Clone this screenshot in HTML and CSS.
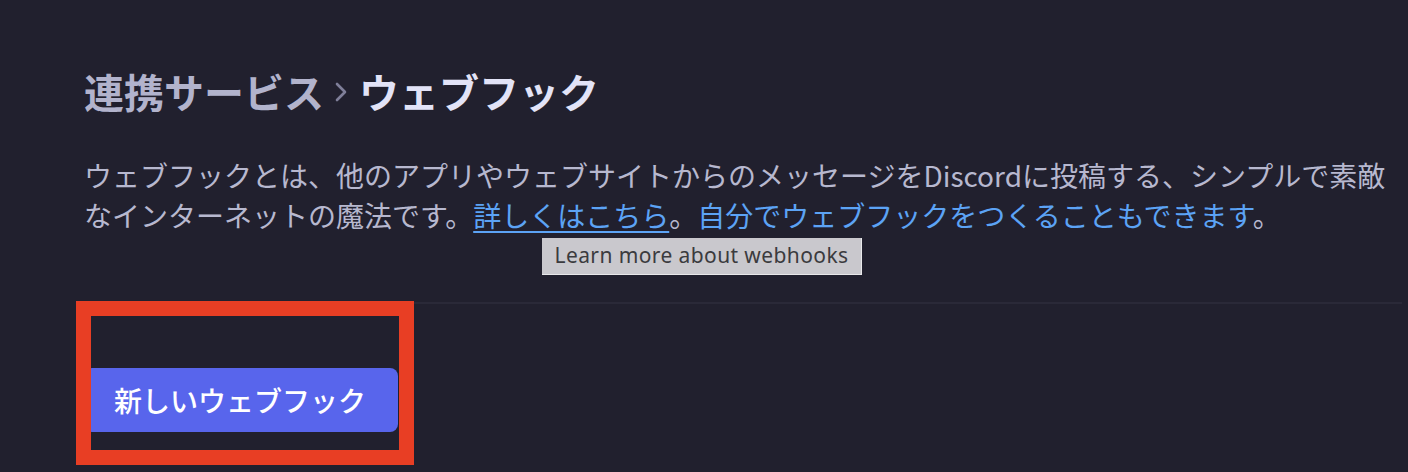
FILE: index.html
```html
<!DOCTYPE html>
<html lang="ja">
<head>
<meta charset="utf-8">
<link rel="stylesheet" href="styles.css">
</head>
<body>
<main class="page">
  <header class="crumbs">
    <span class="crumb-parent">連携サービス</span>
    <svg class="chev" width="14" height="22" viewBox="0 0 14 22"><path d="M3 3 L11 11 L3 19" fill="none" stroke="#7f7f99" stroke-width="2.6" stroke-linecap="round" stroke-linejoin="round"/></svg>
    <span class="crumb-current">ウェブフック</span>
  </header>
  <p class="desc">ウェブフックとは、他のアプリやウェブサイトからのメッセージをDiscordに投稿する、シンプルで素敵なインターネットの魔法です。<a class="link underline" href="#">詳しくはこちら</a>。<a class="link" href="#">自分でウェブフックをつくることもできます</a>。</p>
  <div class="tooltip">Learn more about webhooks</div>
  <hr class="divider">
  <section class="actions">
    <button class="btn">新しいウェブフック</button>
    <div class="highlight"></div>
  </section>
</main>
</body>
</html>
```

FILE: styles.css
```css
html, body {
  margin: 0;
  padding: 0;
  background: #21202e;
  height: 100%;
  overflow: hidden;
}
.page {
  position: relative;
  padding: 64px 0 0 84px;
  font-family: "Noto Sans CJK JP", "Noto Sans", sans-serif;
}
.crumbs {
  display: flex;
  align-items: center;
  gap: 10px;
  height: 54px;
  font-size: 40px;
  font-weight: 700;
}
.crumb-parent { color: #b2b3cc; }
.crumb-current { color: #e2e3f7; margin-left: 1px; }
.chev { margin-top: 2px; }
.desc {
  margin: 37px 0 0 0;
  width: 1310px;
  font-size: 28px;
  line-height: 40px;
  color: #b7b8cf;
}
.link {
  color: #5ca3f5;
  text-decoration: none;
}
.link.underline {
  text-decoration: underline;
  text-underline-offset: 4px;
  text-decoration-thickness: 2px;
}
.tooltip {
  position: absolute;
  left: 542px;
  top: 238px;
  width: 320px;
  height: 37px;
  box-sizing: border-box;
  background: #c9c8cd;
  border-right: 1px solid #e8e8ea;
  border-bottom: 1px solid #e8e8ea;
  color: #3b3b3e;
  font-family: "Noto Sans", sans-serif;
  font-size: 21px;
  letter-spacing: 0.4px;
  line-height: 35px;
  text-align: center;
}
.divider {
  margin: 67px 0 0 0;
  width: 1318px;
  border: 0;
  height: 2px;
  background: #2a2938;
}
.actions {
  position: relative;
  padding-top: 64px;
  display: flex;
}
.btn {
  height: 64px;
  width: 314px;
  padding: 0 30px;
  border: 0;
  border-radius: 8px;
  background: #5865ec;
  color: #ffffff;
  font-family: "Noto Sans CJK JP", "Noto Sans", sans-serif;
  font-size: 28px;
  font-weight: 500;
  text-align: left;
  white-space: nowrap;
  cursor: pointer;
}
.highlight {
  position: absolute;
  left: -8px;
  top: -3px;
  width: 338px;
  height: 164px;
  box-sizing: border-box;
  border: 15px solid #e83e24;
}
```
